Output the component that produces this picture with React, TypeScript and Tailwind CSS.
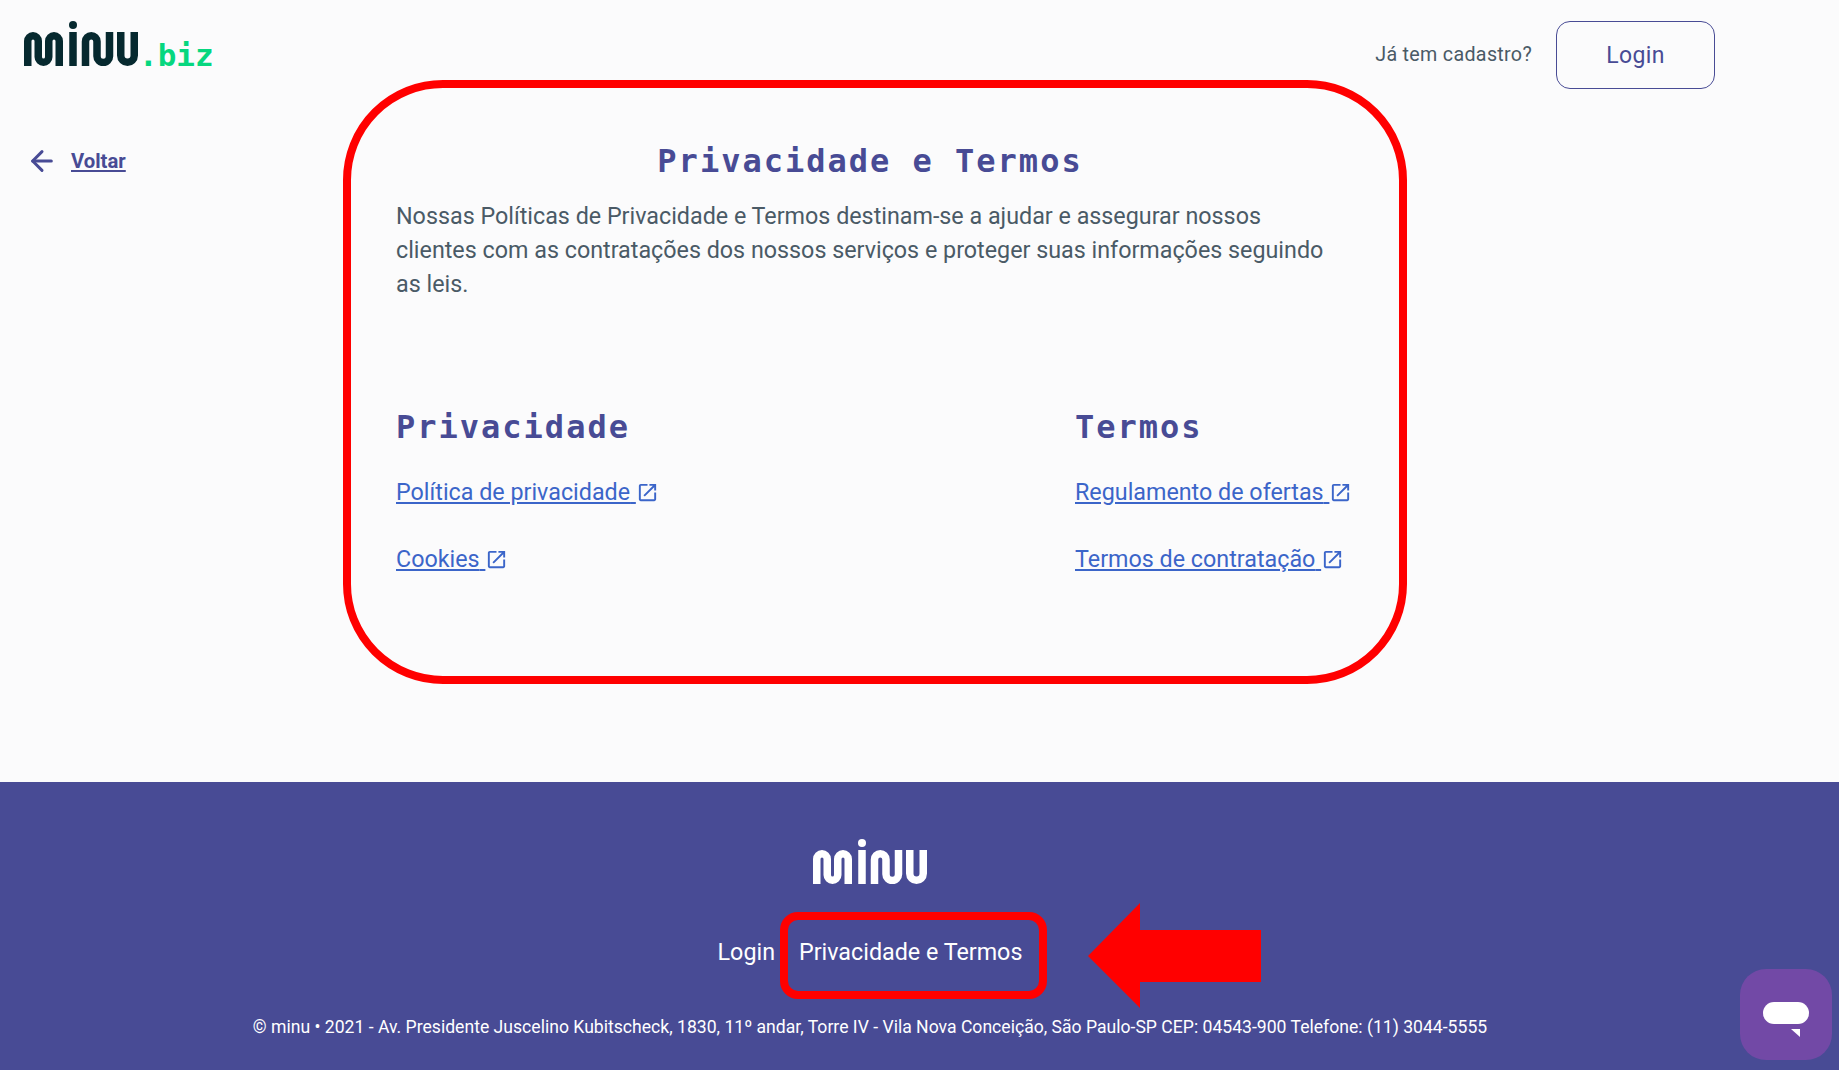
import { ArrowLeft } from 'lucide-react'

const mono = { fontFamily: '"DejaVu Sans Mono", monospace' }

function MinuMark({ className }: { className?: string }) {
  return (
    <svg viewBox="0 0 114 45" className={className} fill="none" stroke="currentColor" strokeWidth="7.5">
      <path d="M3.75 45V20a5.25 5.25 0 0 1 10.5 0V36a5.25 5.25 0 0 0 10.5 0V20a5.25 5.25 0 0 1 10.5 0V45" />
      <path d="M49 45V11" />
      <circle cx="49" cy="4" r="4" fill="currentColor" stroke="none" />
      <path d="M61.5 45V20.5a5.75 5.75 0 0 1 11.5 0V35.25a6.25 6.25 0 0 0 12.5 0V11" />
      <path d="M96.75 11V34.5a6.75 6.75 0 0 0 13.5 0V11" />
    </svg>
  )
}

function OpenInNew() {
  return (
    <svg viewBox="0 0 24 24" className="size-[23px]" fill="currentColor">
      <path d="M19 19H5V5h7V3H5c-1.11 0-2 .9-2 2v14c0 1.1.89 2 2 2h14c1.1 0 2-.9 2-2v-7h-2v7zM14 3v2h3.59l-9.83 9.83 1.41 1.41L19 6.41V10h2V3h-7z" />
    </svg>
  )
}

function ExternalLink({ label }: { label: string }) {
  return (
    <a href="#" className="flex items-center whitespace-nowrap text-[23.3px] leading-[34px] text-[#3b65c9]">
      <span className="underline whitespace-pre">{label} </span>
      <OpenInNew />
    </a>
  )
}

export default function App() {
  return (
    <div className="relative h-[1070px] overflow-hidden bg-[#fbfbfc]" style={{ fontFamily: 'Roboto, sans-serif' }}>
      <header className="flex h-[108px] items-start justify-between pl-6 pr-[124px] pt-[21px]">
        <div className="flex items-end">
          <MinuMark className="h-[45px] w-[114px] text-[#06292f]" />
          <span className="ml-[1px] text-[31px] font-bold leading-[22px] text-[#06d77f]" style={mono}>.biz</span>
        </div>
        <div className="flex items-center gap-6">
          <span className="text-[19.7px] tracking-[0.3px] text-[#4a5a66]">Já tem cadastro?</span>
          <a href="#" className="flex h-[68px] w-[159px] items-center justify-center rounded-[14px] border border-[#484b95] pt-[2px] text-[23px] tracking-[0.4px] text-[#484b95]">
            Login
          </a>
        </div>
      </header>

      <main className="flex h-[674px] items-start">
        <a href="#" className="ml-[26px] mt-[37px] flex w-[370px] items-center gap-[13px] text-[#484b95]">
          <ArrowLeft className="size-[32px]" strokeWidth={2.25} />
          <span className="text-[20.3px] font-bold underline">Voltar</span>
        </a>
        <section className="w-[948px] shrink-0 pt-[33px]">
          <h1 className="text-center text-[32px] font-bold leading-[40px] tracking-[2px] text-[#484b95]" style={mono}>
            Privacidade e Termos
          </h1>
          <p className="mt-[18px] whitespace-nowrap text-[23.3px] leading-[34px] text-[#4a5a66]">
            Nossas Políticas de Privacidade e Termos destinam-se a ajudar e assegurar nossos
            <br />
            clientes com as contratações dos nossos serviços e proteger suas informações seguindo
            <br />
            as leis.
          </p>
          <div className="mt-[106px] grid grid-cols-[679px_1fr]">
            <div className="flex flex-col">
              <h2 className="mb-[28px] text-[32px] font-bold leading-[40px] tracking-[2px] text-[#484b95]" style={mono}>Privacidade</h2>
              <div className="flex flex-col gap-[33px]">
                <ExternalLink label="Política de privacidade" />
                <ExternalLink label="Cookies" />
              </div>
            </div>
            <div className="flex flex-col">
              <h2 className="mb-[28px] text-[32px] font-bold leading-[40px] tracking-[2px] text-[#484b95]" style={mono}>Termos</h2>
              <div className="flex flex-col gap-[33px]">
                <ExternalLink label="Regulamento de ofertas" />
                <ExternalLink label="Termos de contratação" />
              </div>
            </div>
          </div>
        </section>
      </main>

      <footer className="flex h-[288px] flex-col items-center bg-[#484b95] pr-[99px] pt-[57px] text-white">
        <MinuMark className="h-[45px] w-[114px]" />
        <nav className="mt-[51px] flex items-center gap-6 text-[23.3px] leading-[34px]">
          <a href="#">Login</a>
          <a href="#">Privacidade e Termos</a>
        </nav>
        <p className="mt-[46px] text-[17.6px] leading-[24px]">
          © minu • 2021 - Av. Presidente Juscelino Kubitscheck, 1830, 11º andar, Torre IV - Vila Nova Conceição, São Paulo-SP CEP: 04543-900 Telefone: (11) 3044-5555
        </p>
      </footer>

      {/* red annotations */}
      <div className="absolute left-[343px] top-[80px] h-[604px] w-[1064px] rounded-[100px] border-[8px] border-[#ff0000]" />
      <div className="absolute left-[780px] top-[912px] h-[87px] w-[267px] rounded-[18px] border-[8px] border-[#ff0000]" />
      <svg className="absolute left-[1088px] top-[903px] h-[105px] w-[173px]" viewBox="0 0 173 105">
        <path d="M0 53L52 0V27H173V79H52V105Z" fill="#ff0000" />
      </svg>

      <div className="absolute left-[1740px] top-[969px] flex h-[91px] w-[92px] items-center justify-center rounded-[26px] bg-[#7249a6] pt-[10px]">
        <svg viewBox="0 0 48 36" className="h-[36px] w-[48px]">
          <rect x="1" y="0" width="46" height="22" rx="11" fill="#fff" />
          <path d="M29 27H38V35Z" fill="#fff" />
        </svg>
      </div>
    </div>
  )
}
